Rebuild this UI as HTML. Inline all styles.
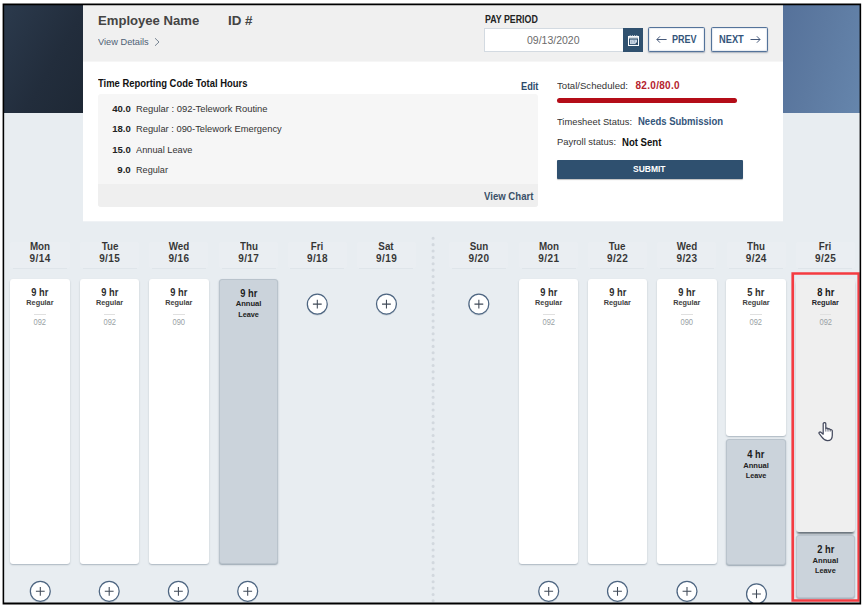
<!DOCTYPE html>
<html>
<head>
<meta charset="utf-8">
<title>Timesheet</title>
<style>
*{box-sizing:border-box;margin:0;padding:0}
html,body{width:863px;height:606px;overflow:hidden;background:#fff}
body{font-family:"Liberation Sans",sans-serif;position:relative;color:#222}
#app{position:absolute;left:0;top:0;width:863px;height:606px;background:#e8edf1;clip-path:inset(4px 2px 2px 3px)}
#overlay{position:absolute;left:0;top:0}
.abs{position:absolute}
.t{position:absolute;white-space:nowrap;line-height:1}
.b{font-weight:bold}
#leftpanel{left:0;top:0;width:83px;height:113px;background:linear-gradient(120deg,#2c3b4e 0%,#222d3c 60%,#1e2835 100%)}
#rightpanel{left:783px;top:0;width:80px;height:113px;background:linear-gradient(105deg,#55719a 0%,#5d7aa1 45%,#6686ad 100%)}
#hdr{left:83px;top:0;width:700px;height:62px;background:#f0f0f0;border-bottom:1px solid #f6f6f6}
#info{left:83px;top:62px;width:700px;height:160px;background:#fff;background-clip:padding-box;border-bottom:1px solid rgba(255,255,255,.3)}
#graybox{left:97.5px;top:94px;width:440.5px;height:112.5px;background:#f6f6f6;border-radius:3px;overflow:hidden}
#grayfoot{left:0;top:90px;width:100%;height:23px;background:#efefef}
#dateinp{left:484px;top:28px;width:139.5px;height:23.5px;background:#fff;border:1px solid #d3dae1;border-right:none}
#calbtn{left:623px;top:28px;width:20px;height:24px;background:#30516f}
.navbtn{position:absolute;top:27px;height:25px;background:#fff;border:1px solid #54739a;border-radius:1.5px;box-shadow:0 1px 1.5px rgba(40,60,90,.35),inset 0 0 1.2px rgba(74,106,142,.9)}
#redbar{left:557px;top:98px;width:180px;height:5px;border-radius:3px;background:#b40d18}
#submit{left:556.5px;top:160px;width:186px;height:19px;background:#2f506f;border-radius:1px;box-shadow:0 1px 1px rgba(0,0,0,.25)}
.card{position:absolute;width:59.5px;background:#fff;border-radius:3px;box-shadow:0 1px 1.5px rgba(60,80,100,.35)}
.card.al{background:#cbd3db;border:1px solid #b9c3cc;box-shadow:0 1px 1.5px rgba(60,80,100,.45)}
.card.hv{background:#efefef;box-shadow:0 2.5px 2.5px -1px rgba(40,52,64,.7)}
.dh{position:absolute;width:60px;height:26px;font-weight:bold;color:#1e1e1e}
.dh b,.dh i{position:absolute;left:0;width:100%;text-align:center;white-space:nowrap;line-height:1;font-style:normal}
.dh b{top:1.6px;font-size:10.9px;transform:scaleX(.9)}
.dh i{top:14.0px;font-size:10px;letter-spacing:.4px;text-indent:.4px}
.hb{position:absolute;width:59.2px;height:26.5px;background:rgba(255,255,255,.1);border-radius:2px}
.hl{position:absolute;height:1px;width:54px;background:#dfe5ea}
.ct{position:absolute;left:0;width:100%;text-align:center;white-space:nowrap;line-height:1}
.hr{font-weight:bold;font-size:10px;color:#2e2e2e;transform:scaleX(.93)}
.ty{font-weight:bold;font-size:7.3px;color:#414141}
.cd{font-size:8.4px;color:#9a9fa5;transform:scaleX(.9)}
.al .hr{color:#1c1c1c}
.hv .hr{color:#161616}
.hv .ty{color:#1d1d28}
.al .ty{color:#222}
.sl{position:absolute;left:23.9px;width:11.7px;height:1px;background:#e0e0e0}
</style>
</head>
<body>
<div id="app">

<div class="abs" id="leftpanel"></div>
<div class="abs" id="rightpanel"></div>
<div class="abs" id="hdr"></div>
<div class="abs" id="info"></div>

<!-- header -->
<span class="t b" id="empname" style="left:98px;top:14.11px;transform:scaleX(0.964);transform-origin:left center;font-size:13.6px;color:#444">Employee Name</span>
<span class="t b" id="empid" style="left:228px;top:14.11px;transform:scaleX(0.982);transform-origin:left center;font-size:13.6px;color:#444">ID #</span>
<span class="t" id="viewdet" style="left:98px;top:37.2px;transform:scaleX(0.944);transform-origin:left center;font-size:9.8px;color:#4f6175">View Details</span>
<svg class="abs" id="chev" style="left:153px;top:37.2px" width="8" height="10" viewBox="0 0 8 10"><path d="M2 1.2 L6 5 L2 8.8" fill="none" stroke="#6a7888" stroke-width="0.9"/></svg>
<span class="t b" id="payperiod" style="left:484.5px;top:15.15px;transform:scaleX(0.857);transform-origin:left center;font-size:10.3px;color:#222">PAY PERIOD</span>
<div class="abs" id="dateinp"></div>
<span class="t" id="datetxt" style="left:527px;top:35px;font-size:10.5px;color:#6b6b6b">09/13/2020</span>
<div class="abs" id="calbtn"><svg class="abs" style="left:5px;top:7px" width="11" height="11" viewBox="0 0 11 11"><rect x="0.5" y="1.5" width="10" height="9" fill="none" stroke="#fff" stroke-width="1"/><rect x="1" y="2" width="9" height="1.5" fill="#fff" fill-opacity=".8"/><path d="M2.2 0.2 V2 M4.4 0.2 V2 M6.6 0.2 V2 M8.8 0.2 V2" stroke="#eef2f6" stroke-width="0.9"/><rect x="2" y="4.6" width="7" height="4.5" fill="#cad6e3"/><path d="M9 7 V9.1 H7.2 Z" fill="#2a3f58"/><path d="M3.7 5.5 V8.3 M5.2 5.6 H6.9 L5.9 8.3" stroke="#8ea5bf" stroke-width="0.7" fill="none"/></svg></div>
<div class="navbtn" id="prevbtn" style="left:648px;width:57px"></div>
<div class="navbtn" id="nextbtn" style="left:710.5px;width:57px"></div>
<svg class="abs" id="larr" style="left:656.2px;top:35px" width="11" height="9" viewBox="0 0 11 9"><path d="M10.6 4.5 H0.9 M4 1.3 L0.9 4.5 L4 7.7" fill="none" stroke="#46597a" stroke-width="1"/></svg>
<span class="t b" id="prevtxt" style="left:672px;top:34.90px;transform:scaleX(0.903);transform-origin:left center;font-size:10px;color:#34557a">PREV</span>
<span class="t b" id="nexttxt" style="left:719px;top:34.90px;transform:scaleX(0.930);transform-origin:left center;font-size:10px;color:#34557a">NEXT</span>
<svg class="abs" id="rarr" style="left:749.6px;top:35px" width="11" height="9" viewBox="0 0 11 9"><path d="M0.5 4.5 H10 M6.9 1.3 L10 4.5 L6.9 7.7" fill="none" stroke="#46597a" stroke-width="1"/></svg>

<!-- info -->
<span class="t b" id="trc" style="left:98px;top:78px;transform:scaleX(0.898);transform-origin:left center;font-size:10.5px;color:#111">Time Reporting Code Total Hours</span>
<span class="t b" id="edit" style="left:520.5px;top:82.25px;transform:scaleX(0.904);transform-origin:left center;font-size:10.2px;color:#2d4a6b">Edit</span>
<div class="abs" id="graybox"><div class="abs" id="grayfoot"></div></div>
<span class="t b" style="left:100px;width:30.75px;text-align:right;top:104.3px;transform:scaleX(0.975);transform-origin:right center;font-size:9.8px;color:#222" id="n1">40.0</span>
<span class="t" style="left:135.5px;top:104.4px;transform:scaleX(0.951);transform-origin:left center;font-size:9.9px;color:#333" id="r1">Regular : 092-Telework Routine</span>
<span class="t b" style="left:100px;width:30.75px;text-align:right;top:124.3px;transform:scaleX(0.975);transform-origin:right center;font-size:9.8px;color:#222" id="n2">18.0</span>
<span class="t" style="left:135.5px;top:124.4px;transform:scaleX(0.945);transform-origin:left center;font-size:9.9px;color:#333" id="r2">Regular : 090-Telework Emergency</span>
<span class="t b" style="left:100px;width:30.75px;text-align:right;top:145.3px;transform:scaleX(0.975);transform-origin:right center;font-size:9.8px;color:#222" id="n3">15.0</span>
<span class="t" style="left:135.5px;top:144.9px;transform:scaleX(0.935);transform-origin:left center;font-size:9.9px;color:#333" id="r3">Annual Leave</span>
<span class="t b" style="left:100px;width:30.75px;text-align:right;top:165.3px;transform:scaleX(0.991);transform-origin:right center;font-size:9.8px;color:#222" id="n4">9.0</span>
<span class="t" style="left:135.5px;top:164.9px;transform:scaleX(0.925);transform-origin:left center;font-size:9.9px;color:#333" id="r4">Regular</span>
<span class="t b" id="viewchart" style="left:483.5px;top:191.7px;transform:scaleX(0.942);transform-origin:left center;font-size:10.2px;color:#3a5068">View Chart</span>

<span class="t" id="ts" style="left:557px;top:81px;transform:scaleX(0.972);transform-origin:left center;font-size:9.9px;color:#333">Total/Scheduled:</span>
<span class="t b" id="tsv" style="left:635.5px;top:81px;font-size:10px;letter-spacing:.3px;color:#b5232e">82.0/80.0</span>
<div class="abs" id="redbar"></div>
<span class="t" id="tst" style="left:557px;top:116.5px;transform:scaleX(0.954);transform-origin:left center;font-size:9.8px;color:#333">Timesheet Status:</span>
<span class="t b" id="tstv" style="left:637.5px;top:116.1px;transform:scaleX(0.897);transform-origin:left center;font-size:10.6px;color:#34557a">Needs Submission</span>
<span class="t" id="ps" style="left:557px;top:137px;transform:scaleX(0.959);transform-origin:left center;font-size:9.8px;color:#333">Payroll status:</span>
<span class="t b" id="psv" style="left:621.5px;top:136.55px;transform:scaleX(0.904);transform-origin:left center;font-size:10.6px;color:#111">Not Sent</span>
<div class="abs" id="submit"></div>
<span class="t b" id="submittxt" style="left:633px;top:165px;transform:scaleX(0.923);transform-origin:left center;font-size:9.2px;color:#fff">SUBMIT</span>

<!-- calendar inserted below -->
<div id="cal">
<svg class="abs" id="divider" style="left:430px;top:230px" width="6" height="376" viewBox="0 0 6 376"><path d="M3.1 8.3 V376" stroke="#d2d8de" stroke-width="3.1" stroke-linecap="round" stroke-dasharray="0 6.36" fill="none"/></svg>
<div class="dh" id="dh1" style="left:9.95px;top:239.6px"><b>Mon</b><i>9/14</i></div>
<div class="hb" style="left:10.35px;top:241.5px"></div>
<div class="hl" style="left:12.95px;top:268px"></div>
<div class="dh" id="dh4" style="left:79.50px;top:239.6px"><b>Tue</b><i>9/15</i></div>
<div class="hb" style="left:79.90px;top:241.5px"></div>
<div class="hl" style="left:82.50px;top:268px"></div>
<div class="dh" id="dh7" style="left:148.75px;top:239.6px"><b>Wed</b><i>9/16</i></div>
<div class="hb" style="left:149.15px;top:241.5px"></div>
<div class="hl" style="left:151.75px;top:268px"></div>
<div class="dh" id="dh10" style="left:218.55px;top:239.6px"><b>Thu</b><i>9/17</i></div>
<div class="hb" style="left:218.95px;top:241.5px"></div>
<div class="hl" style="left:221.55px;top:268px"></div>
<div class="dh" id="dh13" style="left:287.30px;top:239.6px"><b>Fri</b><i>9/18</i></div>
<div class="hb" style="left:287.70px;top:241.5px"></div>
<div class="hl" style="left:290.30px;top:268px"></div>
<div class="dh" id="dh16" style="left:356.40px;top:239.6px"><b>Sat</b><i>9/19</i></div>
<div class="hb" style="left:356.80px;top:241.5px"></div>
<div class="hl" style="left:359.40px;top:268px"></div>
<div class="dh" id="dh19" style="left:448.80px;top:239.6px"><b>Sun</b><i>9/20</i></div>
<div class="hb" style="left:449.20px;top:241.5px"></div>
<div class="hl" style="left:451.80px;top:268px"></div>
<div class="dh" id="dh22" style="left:518.70px;top:239.6px"><b>Mon</b><i>9/21</i></div>
<div class="hb" style="left:519.10px;top:241.5px"></div>
<div class="hl" style="left:521.70px;top:268px"></div>
<div class="dh" id="dh25" style="left:587.40px;top:239.6px"><b>Tue</b><i>9/22</i></div>
<div class="hb" style="left:587.80px;top:241.5px"></div>
<div class="hl" style="left:590.40px;top:268px"></div>
<div class="dh" id="dh28" style="left:656.80px;top:239.6px"><b>Wed</b><i>9/23</i></div>
<div class="hb" style="left:657.20px;top:241.5px"></div>
<div class="hl" style="left:659.80px;top:268px"></div>
<div class="dh" id="dh31" style="left:726.10px;top:239.6px"><b>Thu</b><i>9/24</i></div>
<div class="hb" style="left:726.50px;top:241.5px"></div>
<div class="hl" style="left:729.10px;top:268px"></div>
<div class="dh" id="dh34" style="left:795.40px;top:239.6px"><b>Fri</b><i>9/25</i></div>
<div class="hb" style="left:795.80px;top:241.5px"></div>
<div class="hl" style="left:798.40px;top:268px"></div>
<div class="card " style="left:10.20px;top:278.5px;height:285.0px"><div class="ct hr" style="top:9.50px">9 hr</div><div class="ct ty" style="top:20.5px">Regular</div><div class="sl" style="top:35px"></div><div class="ct cd" style="top:39px">092</div></div>
<div class="card " style="left:79.75px;top:278.5px;height:285.0px"><div class="ct hr" style="top:9.50px">9 hr</div><div class="ct ty" style="top:20.5px">Regular</div><div class="sl" style="top:35px"></div><div class="ct cd" style="top:39px">092</div></div>
<div class="card " style="left:149.00px;top:278.5px;height:285.0px"><div class="ct hr" style="top:9.50px">9 hr</div><div class="ct ty" style="top:20.5px">Regular</div><div class="sl" style="top:35px"></div><div class="ct cd" style="top:39px">090</div></div>
<div class="card al" style="left:218.80px;top:278.5px;height:285.5px"><div class="ct hr" style="top:9.00px">9 hr</div><div class="ct ty" style="top:20.2px;font-size:7.6px">Annual</div><div class="ct ty" style="top:31.3px">Leave</div></div>
<div class="card " style="left:518.95px;top:278.5px;height:285.0px"><div class="ct hr" style="top:9.50px">9 hr</div><div class="ct ty" style="top:20.5px">Regular</div><div class="sl" style="top:35px"></div><div class="ct cd" style="top:39px">092</div></div>
<div class="card " style="left:587.65px;top:278.5px;height:285.0px"><div class="ct hr" style="top:9.50px">9 hr</div><div class="ct ty" style="top:20.5px">Regular</div></div>
<div class="card " style="left:657.05px;top:278.5px;height:285.0px"><div class="ct hr" style="top:9.50px">9 hr</div><div class="ct ty" style="top:20.5px">Regular</div><div class="sl" style="top:35px"></div><div class="ct cd" style="top:39px">090</div></div>
<div class="card " style="left:726.35px;top:278.5px;height:157.75px"><div class="ct hr" style="top:9.50px">5 hr</div><div class="ct ty" style="top:20.5px">Regular</div><div class="sl" style="top:35px"></div><div class="ct cd" style="top:39px">092</div></div>
<div class="card al" style="left:726.35px;top:439.4px;height:126.10000000000002px"><div class="ct hr" style="top:10.10px">4 hr</div><div class="ct ty" style="top:21.3px;font-size:7.6px">Annual</div><div class="ct ty" style="top:31.900000000000002px">Leave</div></div>
<div class="card hv" style="left:795.65px;top:278.5px;height:253.5px"><div class="ct hr" style="top:9.50px">8 hr</div><div class="ct ty" style="top:20.5px">Regular</div><div class="sl" style="top:35px"></div><div class="ct cd" style="top:39px">092</div></div>
<div class="card al" style="left:795.65px;top:534.75px;height:63.25px"><div class="ct hr" style="top:8.80px">2 hr</div><div class="ct ty" style="top:21.3px;font-size:7.6px">Annual</div><div class="ct ty" style="top:30.8px">Leave</div></div>
<svg class="abs" id="pluses" style="left:0;top:0" width="863" height="606" viewBox="0 0 863 606"><g transform="translate(317.30 304.15)"><circle r="10.3" cy="1" fill="#5a6e86" fill-opacity=".28"/><circle r="9.95" fill="#fff" stroke="#4d6581" stroke-width="1.25"/><path d="M-4.4 0 H4.4 M0 -4.4 V4.4" stroke="#3f4957" stroke-width="1.05" fill="none"/></g><g transform="translate(386.45 304.10)"><circle r="10.3" cy="1" fill="#5a6e86" fill-opacity=".28"/><circle r="9.95" fill="#fff" stroke="#4d6581" stroke-width="1.25"/><path d="M-4.4 0 H4.4 M0 -4.4 V4.4" stroke="#3f4957" stroke-width="1.05" fill="none"/></g><g transform="translate(478.85 304.10)"><circle r="10.3" cy="1" fill="#5a6e86" fill-opacity=".28"/><circle r="9.95" fill="#fff" stroke="#4d6581" stroke-width="1.25"/><path d="M-4.4 0 H4.4 M0 -4.4 V4.4" stroke="#3f4957" stroke-width="1.05" fill="none"/></g><g transform="translate(40.30 591.35)"><circle r="10.3" cy="1" fill="#5a6e86" fill-opacity=".28"/><circle r="9.95" fill="#fff" stroke="#4d6581" stroke-width="1.25"/><path d="M-4.4 0 H4.4 M0 -4.4 V4.4" stroke="#3f4957" stroke-width="1.05" fill="none"/></g><g transform="translate(109.20 591.35)"><circle r="10.3" cy="1" fill="#5a6e86" fill-opacity=".28"/><circle r="9.95" fill="#fff" stroke="#4d6581" stroke-width="1.25"/><path d="M-4.4 0 H4.4 M0 -4.4 V4.4" stroke="#3f4957" stroke-width="1.05" fill="none"/></g><g transform="translate(178.40 591.35)"><circle r="10.3" cy="1" fill="#5a6e86" fill-opacity=".28"/><circle r="9.95" fill="#fff" stroke="#4d6581" stroke-width="1.25"/><path d="M-4.4 0 H4.4 M0 -4.4 V4.4" stroke="#3f4957" stroke-width="1.05" fill="none"/></g><g transform="translate(247.70 591.35)"><circle r="10.3" cy="1" fill="#5a6e86" fill-opacity=".28"/><circle r="9.95" fill="#fff" stroke="#4d6581" stroke-width="1.25"/><path d="M-4.4 0 H4.4 M0 -4.4 V4.4" stroke="#3f4957" stroke-width="1.05" fill="none"/></g><g transform="translate(548.70 591.35)"><circle r="10.3" cy="1" fill="#5a6e86" fill-opacity=".28"/><circle r="9.95" fill="#fff" stroke="#4d6581" stroke-width="1.25"/><path d="M-4.4 0 H4.4 M0 -4.4 V4.4" stroke="#3f4957" stroke-width="1.05" fill="none"/></g><g transform="translate(617.50 591.35)"><circle r="10.3" cy="1" fill="#5a6e86" fill-opacity=".28"/><circle r="9.95" fill="#fff" stroke="#4d6581" stroke-width="1.25"/><path d="M-4.4 0 H4.4 M0 -4.4 V4.4" stroke="#3f4957" stroke-width="1.05" fill="none"/></g><g transform="translate(687.00 591.35)"><circle r="10.3" cy="1" fill="#5a6e86" fill-opacity=".28"/><circle r="9.95" fill="#fff" stroke="#4d6581" stroke-width="1.25"/><path d="M-4.4 0 H4.4 M0 -4.4 V4.4" stroke="#3f4957" stroke-width="1.05" fill="none"/></g><g transform="translate(756.50 593.90)"><circle r="10.3" cy="1" fill="#5a6e86" fill-opacity=".28"/><circle r="9.95" fill="#fff" stroke="#4d6581" stroke-width="1.25"/><path d="M-4.4 0 H4.4 M0 -4.4 V4.4" stroke="#3f4957" stroke-width="1.05" fill="none"/></g></svg>
<svg class="abs" id="hand" style="left:818px;top:421.5px" width="16" height="20" viewBox="0 0 16 20"><path d="M5.2 1.8 C5.2 0.2 7.8 0.2 7.8 1.8 L7.8 6.6 C8.4 5.8 9.9 6.0 10.0 7.1 C10.7 6.4 12.1 6.7 12.2 7.8 C12.9 7.3 14.2 7.7 14.3 8.9 L14.3 13.2 C14.3 16.8 12.4 18.7 9.5 18.7 C6.7 18.7 5.3 17.1 3.7 14.9 L1.2 11.7 C0.5 10.6 1.8 9.5 2.9 10.3 L5.2 12.2 Z" fill="#fff" stroke="#454a5e" stroke-width="1.25" stroke-linejoin="round"/><path d="M7.8 6.6 V9.6 M10 7.2 V9.6 M12.2 7.9 V9.6" stroke="#454a5e" stroke-width="0.8" fill="none"/></svg>
</div>
<!-- /calendar -->
</div>
<svg id="overlay" width="863" height="606" viewBox="0 0 863 606">
<path fill="#f43b41" fill-rule="evenodd" d="M791.4 272.3 H859.7 V601.7 H791.4 Z M794.1 274.7 V599.3 H857.4 V274.7 Z"/>
<path fill="#000" fill-rule="evenodd" d="M2.6 3.5 H861.15 V604.6 H2.6 Z M4.17 5.2 V602.4 H859.6 V5.2 Z"/>
</svg>
</body>
</html>
